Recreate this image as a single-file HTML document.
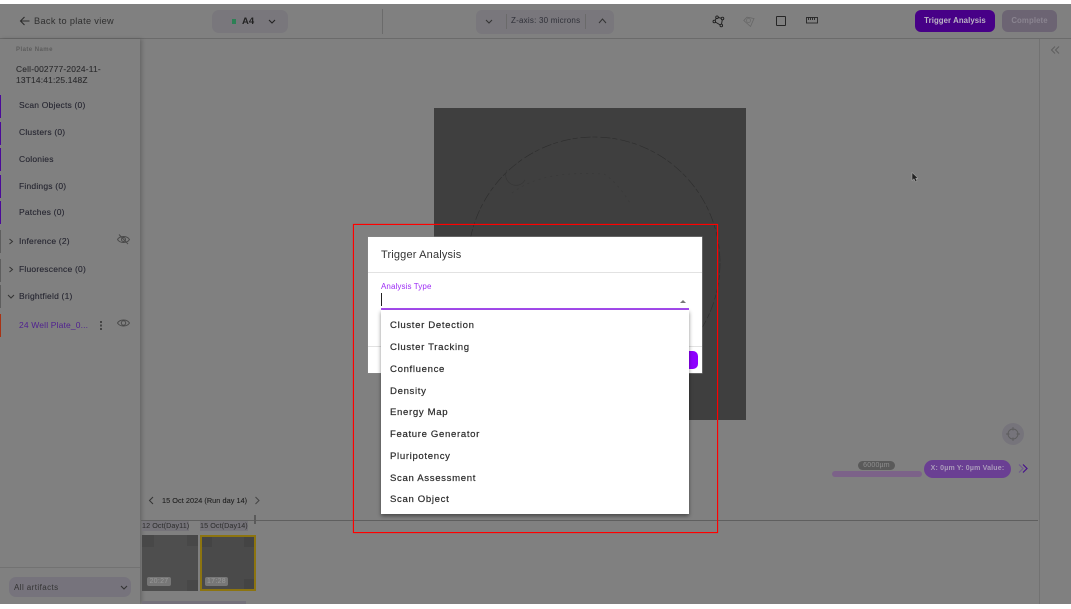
<!DOCTYPE html>
<html><head><meta charset="utf-8">
<style>
*{box-sizing:border-box;margin:0;padding:0}
html,body{width:1071px;height:609px;overflow:hidden;background:#fff;font-family:"Liberation Sans",sans-serif}
#app{position:absolute;left:0;top:4px;width:1071px;height:600px;background:#808080;overflow:hidden}
.a{position:absolute;white-space:nowrap}
svg{position:absolute;overflow:visible;fill:none}
.t{font-size:8.5px;color:#252530;letter-spacing:.2px;line-height:12px;-webkit-text-stroke:.1px #252530}
.bar{position:absolute;left:0;width:1px;height:23px}
.opt{position:absolute;left:9px;font-size:9.6px;color:#2b2b2b;letter-spacing:.65px;line-height:12px;white-space:nowrap;-webkit-text-stroke:.2px #2b2b2b}
</style></head><body>
<div id="app">
<div class="a" style="left:0;top:34px;width:1071px;height:1px;background:#6b6b6b"></div>
<svg style="left:19px;top:11px" width="14" height="12" stroke="#2c2c2c" stroke-width="1.1"><path d="M1.500 6H10.500M5.500 2L1.500 6L5.500 10"/></svg>
<div class="a" style="left:34px;top:11px;font-size:9.200px;color:#2f2f2f;letter-spacing:.33px;line-height:12px">Back to plate view</div>
<div class="a" style="left:212px;top:6px;width:76px;height:23px;background:#79777c;border-radius:7px"></div>
<div class="a" style="left:232px;top:15px;width:4px;height:5px;background:#2d8055"></div>
<div class="a" style="left:242px;top:12px;font-size:9.500px;font-weight:bold;color:#222;line-height:12px">A4</div>
<svg style="left:268px;top:15px" width="8" height="6" stroke="#222" stroke-width="1.1"><path d="M1 1L4 4L7 1"/></svg>
<div class="a" style="left:382px;top:5px;width:1px;height:25px;background:#6b6b6b"></div>
<div class="a" style="left:476px;top:6px;width:138px;height:24px;background:#79777c;border-radius:6px"></div>
<div class="a" style="left:506px;top:10px;width:1px;height:15px;background:#6a6a6a"></div>
<div class="a" style="left:585px;top:10px;width:1px;height:15px;background:#6a6a6a"></div>
<svg style="left:485px;top:15px" width="8" height="6" stroke="#333" stroke-width="1"><path d="M1 1L4 4L7 1"/></svg>
<svg style="left:598px;top:14px" width="9" height="6" stroke="#333" stroke-width="1"><path d="M1 5L4.500 1L8 5"/></svg>
<div class="a" style="left:511px;top:11px;font-size:8px;color:#2f3038;letter-spacing:.22px;line-height:11px">Z-axis: 30 microns</div>
<svg style="left:712px;top:11px" width="14" height="14" stroke="#1e1e1e" stroke-width=".9"><path d="M5 2.200L10.500 3.500L9.300 10.500L2.300 6.500Z"/><circle cx="5" cy="2.200" r="1.300" fill="#808080"/><circle cx="10.500" cy="3.500" r="1.300" fill="#808080"/><circle cx="9.300" cy="10.500" r="1.300" fill="#808080"/><circle cx="2.300" cy="6.500" r="1.300" fill="#808080"/></svg>
<svg style="left:742px;top:11px" width="14" height="14" stroke="#666" stroke-width=".8"><path d="M5 2.200L12 3.500L8.500 11.500L1.800 5.500Z"/><circle cx="6.500" cy="5.500" r="2" stroke="#6a6a6a"/></svg>
<div class="a" style="left:776px;top:12px;width:10px;height:10px;border:1.200px solid #262626;border-radius:1px"></div>
<svg style="left:806px;top:13px" width="12" height="7" stroke="#262626" stroke-width=".9"><rect x=".5" y=".5" width="11" height="5.500"/><path d="M2.500 .5V3M4.500 .5V3M6.500 .5V3M8.500 .5V3"/></svg>
<div class="a" style="left:915px;top:6px;width:80px;height:22px;background:#470087;border-radius:6px;text-align:center;font-size:7.800px;font-weight:bold;color:#bcb5c5;line-height:22px;letter-spacing:.08px">Trigger Analysis</div>
<div class="a" style="left:1002px;top:6px;width:55px;height:22px;background:#6c6473;border-radius:6px;text-align:center;font-size:7.800px;font-weight:bold;color:#8a8490;line-height:22px;letter-spacing:.1px">Complete</div>

<div class="a" style="left:1039px;top:35px;width:1px;height:565px;background:#727272"></div>
<svg style="left:1051px;top:42px" width="9" height="9" stroke="#5e5e5e" stroke-width="1"><path d="M4 .5L.5 4L4 7.500M8 .5L4.500 4L8 7.500"/></svg>

<div class="a" style="left:0;top:35px;width:140px;height:565px;background:#808080;box-shadow:2px 0 4px rgba(0,0,0,.2)"></div>
<div class="a" style="left:16px;top:41px;font-size:6px;color:#5c5c5c;letter-spacing:.45px;line-height:10px;font-weight:bold">Plate Name</div>
<div class="a t" style="left:16px;top:60px;line-height:10.500px;color:#2b2b2b;font-size:8.400px;letter-spacing:.2px">Cell-002777-2024-11-<br>13T14:41:25.148Z</div>
<div class="bar" style="top:91px;background:#4b0a99"></div>
<div class="bar" style="top:118px;background:#4b0a99"></div>
<div class="bar" style="top:144px;background:#4b0a99"></div>
<div class="bar" style="top:171px;background:#4b0a99"></div>
<div class="bar" style="top:197px;background:#4b0a99"></div>
<div class="bar" style="top:226px;background:#5e5e5e"></div>
<div class="bar" style="top:255px;background:#5e5e5e"></div>
<div class="bar" style="top:281px;background:#5e5e5e"></div>
<div class="bar" style="top:310px;background:#a83214"></div>
<div class="a t" style="left:19px;top:95px">Scan Objects (0)</div>
<div class="a t" style="left:19px;top:122px">Clusters (0)</div>
<div class="a t" style="left:19px;top:149px">Colonies</div>
<div class="a t" style="left:19px;top:176px">Findings (0)</div>
<div class="a t" style="left:19px;top:202px">Patches (0)</div>
<div class="a t" style="left:19px;top:231px">Inference (2)</div>
<div class="a t" style="left:19px;top:259px">Fluorescence (0)</div>
<div class="a t" style="left:19px;top:286px">Brightfield (1)</div>
<div class="a t" style="left:19px;top:315px;color:#4f1f90;-webkit-text-stroke:0;letter-spacing:.15px">24 Well Plate_0...</div>
<svg style="left:8px;top:234px" width="6" height="8" stroke="#333" stroke-width="1"><path d="M1.500 1L4.500 3.500L1.500 6"/></svg>
<svg style="left:8px;top:262px" width="6" height="8" stroke="#333" stroke-width="1"><path d="M1.500 1L4.500 3.500L1.500 6"/></svg>
<svg style="left:7px;top:290px" width="8" height="6" stroke="#333" stroke-width="1"><path d="M1 1L4 4L7 1"/></svg>
<svg style="left:117px;top:230px" width="13" height="11" stroke="#4a4a4a" stroke-width="1"><path d="M.5 5.500C3 1.500 10 1.500 12.500 5.500C10 9.500 3 9.500 .5 5.500Z"/><circle cx="6.500" cy="5.500" r="2"/><path d="M2 .5L11 10"/></svg>
<svg style="left:117px;top:314px" width="13" height="10" stroke="#4a4a4a" stroke-width="1"><path d="M.5 5C3 1 10 1 12.500 5C10 9 3 9 .5 5Z"/><circle cx="6.500" cy="5" r="2.200"/></svg>
<div class="a" style="left:100px;top:317px;width:2px;height:2px;background:#444;box-shadow:0 3.500px #444,0 7px #444"></div>
<div class="a" style="left:0;top:563px;width:140px;height:1px;background:#727272"></div>
<div class="a" style="left:9px;top:573px;width:122px;height:20px;background:#76737c;border-radius:7px;font-size:8px;color:#333;line-height:21px;padding-left:5px;letter-spacing:.42px">All artifacts</div>
<svg style="left:120px;top:581px" width="8" height="6" stroke="#333" stroke-width="1.100"><path d="M1 1L4 4L7 1"/></svg>

<svg style="left:148px;top:492px" width="7" height="10" stroke="#333" stroke-width="1"><path d="M5 1L1.500 4.500L5 8"/></svg>
<svg style="left:254px;top:492px" width="7" height="10" stroke="#444" stroke-width="1"><path d="M1.500 1L5 4.500L1.500 8"/></svg>
<div class="a" style="left:162px;top:491px;font-size:7.300px;color:#1f1f1f;letter-spacing:.05px;line-height:11px;-webkit-text-stroke:.1px #1f1f1f">15 Oct 2024 (Run day 14)</div>
<div class="a" style="left:141px;top:516px;width:897px;height:1px;background:#5f5f5f"></div>
<div class="a" style="left:254px;top:511px;width:2px;height:9px;background:#5a5a5a"></div>
<div class="a" style="left:142px;top:517px;font-size:7.200px;color:#2c2c2c;background:#757379;letter-spacing:.08px;line-height:10px">12 Oct(Day11)</div>
<div class="a" style="left:200px;top:517px;font-size:7.200px;color:#2c2c2c;background:#757379;letter-spacing:.08px;line-height:10px">15 Oct(Day14)</div>
<div class="a" style="left:142px;top:531px;width:56px;height:56px;background:#4e4e4e"></div>
<div class="a" style="left:142px;top:531px;width:12px;height:12px;background:#484848"></div>
<div class="a" style="left:187px;top:531px;width:11px;height:11px;background:#484848"></div>
<div class="a" style="left:187px;top:576px;width:11px;height:11px;background:#484848"></div>
<div class="a" style="left:147px;top:573px;width:24px;height:9px;background:#777;border-radius:2px;font-size:7px;color:#999;line-height:9px;text-align:center;letter-spacing:.3px">20:27</div>
<div class="a" style="left:200px;top:531px;width:56px;height:56px;background:#4a4a4a;border:2px solid #8c7410"></div>
<div class="a" style="left:202px;top:533px;width:10px;height:10px;background:#444"></div>
<div class="a" style="left:244px;top:533px;width:10px;height:10px;background:#444"></div>
<div class="a" style="left:244px;top:575px;width:10px;height:10px;background:#444"></div>
<div class="a" style="left:205px;top:573px;width:23px;height:9px;background:#777;border-radius:2px;font-size:7px;color:#999;line-height:9px;text-align:center;letter-spacing:.3px">17:28</div>
<div class="a" style="left:142px;top:597px;width:104px;height:3px;background:#74717b"></div>

<div class="a" style="left:434px;top:104px;width:312px;height:312px;background:#3f3f3f"></div>
<svg style="left:434px;top:104px" width="312" height="312" stroke="#2d2d2d" stroke-width=".6"><circle cx="160" cy="155" r="126" stroke-dasharray="10 2 5 3"/><path d="M73 62a10 10 0 1 0 18 10" stroke="#363636"/><path d="M78 85C100 68 130 64 170 66C180 72 190 85 196 95" stroke="#383838" stroke-dasharray="2 4"/></svg>

<div class="a" style="left:1002px;top:419px;width:22px;height:22px;border-radius:50%;background:#76747b"></div>
<svg style="left:1006px;top:423px" width="14" height="14" stroke="#5c5c5c" stroke-width=".9"><circle cx="7" cy="7" r="5"/><path d="M7 0V3.500M7 10.500V14M0 7H3.500M10.500 7H14"/></svg>
<div class="a" style="left:858px;top:457px;width:37px;height:9px;background:#5a5a5a;border-radius:5px;font-size:7px;color:#8f8f8f;line-height:9px;text-align:center;letter-spacing:.2px">6000µm</div>
<div class="a" style="left:832px;top:467px;width:90px;height:6px;background:#7c6289;border-radius:3px"></div>
<div class="a" style="left:924px;top:456px;width:87px;height:18px;background:#6a3f93;border-radius:9px;font-size:7px;font-weight:bold;color:#ab9cbb;line-height:18px;text-align:center;letter-spacing:.18px">X: 0µm Y: 0µm Value:</div>
<svg style="left:1018px;top:460px" width="10" height="10" stroke-width="1.200"><path d="M1 .5L5 4.500L1 8.500" stroke="#6e5a8c"/><path d="M5 .5L9 4.500L5 8.500" stroke="#46108c"/></svg>

<svg style="left:911px;top:168px" width="9" height="12"><path d="M1 .5V8.500L3 6.800L4.500 10L6 9.200L4.700 6.200H7Z" fill="#222" stroke="#bbb" stroke-width=".5"/></svg>
</div>

<div class="a" style="left:353px;top:224px;width:365px;height:309px;border:1px solid #f00;box-shadow:0 0 1px rgba(255,0,0,.7)"></div>

<div class="a" style="left:368px;top:237px;width:334px;height:136px;background:#fff;box-shadow:0 0 0 .5px #888">
  <div class="a" style="left:13px;top:11px;font-size:11px;color:#333;line-height:13px;letter-spacing:.16px;padding-top:1px">Trigger Analysis</div>
  <div class="a" style="left:0;top:35px;width:334px;height:1px;background:#e2e2e2"></div>
  <div class="a" style="left:13px;top:44px;font-size:8px;color:#9d2cf5;line-height:11px;letter-spacing:.1px">Analysis Type</div>
  <div class="a" style="left:13px;top:56px;width:1px;height:13px;background:#222"></div>
  <div class="a" style="left:312px;top:63px;width:0;height:0;border-left:3px solid transparent;border-right:3px solid transparent;border-bottom:3px solid #777"></div>
  <div class="a" style="left:13px;top:71px;width:308px;height:2px;background:#a64cf0"></div>
  <div class="a" style="left:0;top:109px;width:334px;height:1px;background:#e2e2e2"></div>
  <div class="a" style="left:290px;top:114px;width:40px;height:18px;background:#8f00ff;border-radius:5px"></div>
</div>

<div class="a" style="left:381px;top:310px;width:308px;height:204px;background:#fff;box-shadow:0 2px 4px rgba(0,0,0,.45)">
  <div class="opt" style="top:10px">Cluster Detection</div>
  <div class="opt" style="top:32px">Cluster Tracking</div>
  <div class="opt" style="top:54px">Confluence</div>
  <div class="opt" style="top:76px">Density</div>
  <div class="opt" style="top:97px">Energy Map</div>
  <div class="opt" style="top:119px">Feature Generator</div>
  <div class="opt" style="top:141px">Pluripotency</div>
  <div class="opt" style="top:163px">Scan Assessment</div>
  <div class="opt" style="top:184px">Scan Object</div>
</div>
</body></html>
